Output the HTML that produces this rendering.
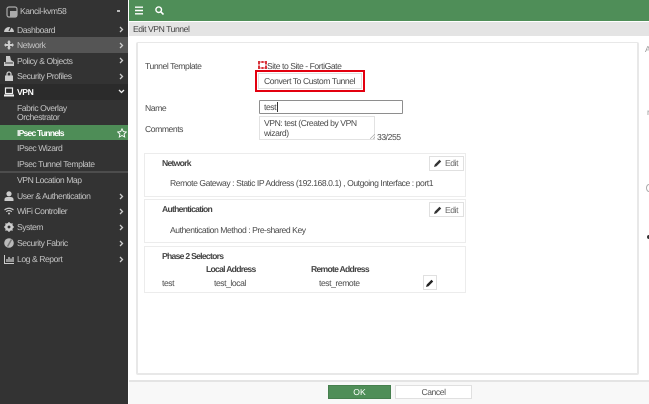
<!DOCTYPE html>
<html><head><meta charset="utf-8"><title>Edit VPN Tunnel</title>
<style>
html,body{margin:0;padding:0;background:#fff}
body{width:649px;height:404px;position:relative;overflow:hidden}
#w{position:absolute;left:0;top:0;width:649px;height:404px;overflow:hidden;background:#fff;filter:blur(.35px);font-family:"Liberation Sans",sans-serif;font-size:8.6px;color:#4a4a4a;letter-spacing:-.44px;text-rendering:geometricPrecision}
.a{position:absolute;white-space:nowrap;line-height:12px}
.box{position:absolute;box-sizing:border-box}
#side{position:absolute;left:0;top:0;width:128px;height:404px;background:#333}
.row{position:absolute;left:0;width:128px;height:16px}
.m{position:absolute;left:17px;white-space:nowrap;line-height:12px;color:#c4c4c4}
.chev{position:absolute;left:119px;width:5px;height:7px}
.ic{position:absolute;left:4px;width:10px;height:10px}
.sec{position:absolute;left:144px;width:322px;background:#fff;border:1px solid #ececec;box-sizing:border-box}
.btn{position:absolute;box-sizing:border-box;background:#fff;border:1px solid #e0e0e0}
b{font-weight:bold;color:#444;letter-spacing:-.72px}
</style></head><body><div id="w">
<div id="side">
 <div class="row" style="top:37px;background:#555"></div>
 <div class="row" style="top:84px;background:#2b2b2b"></div>
 <div class="row" style="top:125px;height:15px;background:#4e8d57"></div>
 <div class="row" style="top:171px;height:2px;background:#4d4d4d"></div>

 <svg class="ic" style="left:6px;top:6px;width:12px;height:12px" viewBox="0 0 12 12"><rect x="1" y="1" width="10" height="10" rx="2" fill="none" stroke="#aaa" stroke-width="1.2"/><rect x="4" y="5" width="7" height="6" fill="#aaa"/></svg>
 <div class="m" style="left:20px;top:5px">Kancil-kvm58</div>
 <div class="box" style="left:117px;top:10px;width:3px;height:2px;background:#bbb"></div>

 <svg class="ic" style="top:24px" viewBox="0 0 10 10"><path d="M0 8a5 5 0 1 1 10 0z" fill="#c8c8c8"/><path d="M5 7L7 3" stroke="#333" stroke-width="1.2"/></svg>
 <div class="m" style="top:24px">Dashboard</div>
 <svg class="ic" style="top:40px" viewBox="0 0 10 10"><path d="M5 0L7 2.500H6V4H8V3L10 5 8 7V6H6V7.500H7L5 10 3 7.500H4V6H2V7L0 5 2 3V4H4V2.500H3z" fill="#ccc"/></svg>
 <div class="m" style="top:39px">Network</div>
 <svg class="ic" style="top:56px" viewBox="0 0 10 10"><path d="M2 0H6L7 4 10 6V10H0V6H2z" fill="#c8c8c8"/><path d="M1 7H9" stroke="#333"/></svg>
 <div class="m" style="top:55px">Policy &amp; Objects</div>
 <svg class="ic" style="top:71px" viewBox="0 0 10 10"><rect x="1" y="4.500" width="8" height="5.500" fill="#ccc"/><path d="M3 5V3a2 2 0 0 1 4 0V5" fill="none" stroke="#ccc" stroke-width="1.300"/></svg>
 <div class="m" style="top:70px">Security Profiles</div>
 <svg class="ic" style="top:87px" viewBox="0 0 10 10"><rect x="1.500" y="1" width="7" height="5.500" fill="none" stroke="#eee" stroke-width="1.200"/><rect x="0" y="7.500" width="10" height="2" fill="#eee"/></svg>
 <div class="m" style="top:86px;color:#fff;font-weight:bold">VPN</div>

 <div class="m" style="top:102px">Fabric Overlay</div>
 <div class="m" style="top:111px">Orchestrator</div>
 <div class="m" style="top:127px;color:#fff;font-weight:bold;letter-spacing:-.8px">IPsec Tunnels</div>
 <svg class="ic" style="left:117px;top:128px" viewBox="0 0 10 10"><path d="M5 .8L6.300 3.600 9.300 4 7.100 6 7.700 9 5 7.500 2.300 9 2.900 6 .7 4 3.700 3.600z" fill="none" stroke="#fff" stroke-width=".9"/></svg>
 <div class="m" style="top:142px">IPsec Wizard</div>
 <div class="m" style="top:158px">IPsec Tunnel Template</div>
 <div class="m" style="top:174px">VPN Location Map</div>

 <svg class="ic" style="top:191px" viewBox="0 0 10 10"><circle cx="5" cy="2.800" r="2.600" fill="#ccc"/><path d="M.5 10V8Q1 6 3.500 6H6.500Q9 6 9.500 8V10z" fill="#ccc"/></svg>
 <div class="m" style="top:190px">User &amp; Authentication</div>
 <svg class="ic" style="top:206px" viewBox="0 0 10 10"><path d="M.5 4Q5 .5 9.500 4M2.200 5.700Q5 3.500 7.800 5.700" fill="none" stroke="#ccc" stroke-width="1.100"/><circle cx="5" cy="7.500" r="1" fill="#ccc"/></svg>
 <div class="m" style="top:205px">WiFi Controller</div>
 <svg class="ic" style="top:222px" viewBox="0 0 10 10"><circle cx="5" cy="5" r="3" fill="none" stroke="#ccc" stroke-width="2.200"/><path d="M5 0V10M0 5H10M1.500 1.500L8.500 8.500M8.500 1.500L1.500 8.500" stroke="#ccc" stroke-width="1.300"/><circle cx="5" cy="5" r="1.400" fill="#333"/></svg>
 <div class="m" style="top:221px">System</div>
 <svg class="ic" style="top:238px" viewBox="0 0 10 10"><circle cx="5" cy="5" r="4.800" fill="#bbb"/><path d="M7.500 1.500L3.500 8.500" stroke="#777" stroke-width="1.500"/></svg>
 <div class="m" style="top:237px">Security Fabric</div>
 <svg class="ic" style="top:254px" viewBox="0 0 10 10"><path d="M.5 1V9.500H10" fill="none" stroke="#ccc"/><path d="M3 8V5M5 8V3M7 8V4.500M9 8V3" stroke="#ccc" stroke-width="1.300"/></svg>
 <div class="m" style="top:253px">Log &amp; Report</div>

 <svg class="chev" style="top:26px" viewBox="0 0 5 7"><path d="M1 1L3.500 3.500 1 6" fill="none" stroke="#ccc" stroke-width="1.300"/></svg>
 <svg class="chev" style="top:42px" viewBox="0 0 5 7"><path d="M1 1L3.500 3.500 1 6" fill="none" stroke="#ccc" stroke-width="1.300"/></svg>
 <svg class="chev" style="top:57px" viewBox="0 0 5 7"><path d="M1 1L3.500 3.500 1 6" fill="none" stroke="#ccc" stroke-width="1.300"/></svg>
 <svg class="chev" style="top:73px" viewBox="0 0 5 7"><path d="M1 1L3.500 3.500 1 6" fill="none" stroke="#ccc" stroke-width="1.300"/></svg>
 <svg class="chev" style="left:118px;top:89px;width:7px;height:5px" viewBox="0 0 7 5"><path d="M1 1L3.500 3.500 6 1" fill="none" stroke="#eee" stroke-width="1.300"/></svg>
 <svg class="chev" style="top:193px" viewBox="0 0 5 7"><path d="M1 1L3.500 3.500 1 6" fill="none" stroke="#ccc" stroke-width="1.300"/></svg>
 <svg class="chev" style="top:208px" viewBox="0 0 5 7"><path d="M1 1L3.500 3.500 1 6" fill="none" stroke="#ccc" stroke-width="1.300"/></svg>
 <svg class="chev" style="top:224px" viewBox="0 0 5 7"><path d="M1 1L3.500 3.500 1 6" fill="none" stroke="#ccc" stroke-width="1.300"/></svg>
 <svg class="chev" style="top:240px" viewBox="0 0 5 7"><path d="M1 1L3.500 3.500 1 6" fill="none" stroke="#ccc" stroke-width="1.300"/></svg>
 <svg class="chev" style="top:256px" viewBox="0 0 5 7"><path d="M1 1L3.500 3.500 1 6" fill="none" stroke="#ccc" stroke-width="1.300"/></svg>
</div>

<div class="box" style="left:129px;top:0;width:520px;height:21px;background:#4f8e58"></div>
<svg class="a" style="left:135px;top:6px" width="9" height="9" viewBox="0 0 9 9"><path d="M0 1.200H8M0 4.500H8M0 7.800H8" stroke="#fff" stroke-width="1.400"/></svg>
<svg class="a" style="left:155px;top:6px" width="9" height="9" viewBox="0 0 9 9"><circle cx="3.700" cy="3.700" r="2.800" fill="none" stroke="#fff" stroke-width="1.400"/><path d="M5.800 5.800L8.500 8.500" stroke="#fff" stroke-width="1.600"/></svg>

<div class="box" style="left:129px;top:22px;width:520px;height:14px;background:#e4e4e4"></div>
<div class="a" style="left:133px;top:23px;color:#444">Edit VPN Tunnel</div>

<div class="box" style="left:136px;top:42px;width:503px;height:333px;background:#fff;border:1px solid #e8e8e8;border-width:1px 2px 2px 2px;border-radius:2px"></div>
<div class="a" style="left:645px;top:43px;color:#999">A</div>
<div class="a" style="left:647px;top:106px;color:#999">r</div>
<div class="box" style="left:646px;top:184px;width:6px;height:8px;border:1px solid #aaa;border-radius:50%"></div>
<div class="box" style="left:647px;top:235px;width:4px;height:4px;background:#333;border-radius:50%"></div>

<div class="a" style="left:145px;top:60px">Tunnel Template</div>
<svg class="a" style="left:258px;top:61px" width="9" height="8" viewBox="0 0 9 8"><path d="M0 1H9M0 7H9" stroke="#d8333a" stroke-width="2" stroke-dasharray="2.400 .9"/><path d="M1 2V6M8 2V6" stroke="#d8333a" stroke-width="2" stroke-dasharray="1.500 1"/></svg>
<div class="a" style="left:267px;top:60px">Site to Site - FortiGate</div>
<div class="box" style="left:255px;top:70px;width:110px;height:22px;border:2px solid #e3000f"></div>
<div class="btn" style="left:258px;top:73px;width:104px;height:16px"></div>
<div class="a" style="left:264px;top:75px">Convert To Custom Tunnel</div>

<div class="a" style="left:145px;top:102px">Name</div>
<div class="box" style="left:259px;top:100px;width:144px;height:14px;background:#fff;border:1px solid #8e8e8e;border-radius:1px"></div>
<div class="a" style="left:264px;top:101px">test</div>
<div class="box" style="left:277px;top:102px;width:1px;height:10px;background:#333"></div>

<div class="a" style="left:145px;top:123px">Comments</div>
<div class="box" style="left:259px;top:116px;width:116px;height:24px;background:#fff;border:1px solid #e2e2e2"></div>
<div class="a" style="left:264px;top:118px;line-height:10px">VPN: test (Created by VPN<br>wizard)</div>
<svg class="a" style="left:370px;top:134px" width="5" height="5" viewBox="0 0 5 5"><path d="M0 5L5 0M3 5L5 3" stroke="#aaa" stroke-width=".7"/></svg>
<div class="a" style="left:377px;top:131px">33/255</div>

<div class="sec" style="top:153px;height:44px"></div>
<div class="a" style="left:162px;top:157px"><b>Network</b></div>
<div class="btn" style="left:429px;top:156px;width:35px;height:15px"></div>
<svg class="a" style="left:434px;top:159px" width="8" height="8" viewBox="0 0 8 8"><path d="M0 8L.8 5.500 5.500 .8 7.200 2.500 2.500 7.200z" fill="#333"/></svg>
<div class="a" style="left:445px;top:157px;color:#666">Edit</div>
<div class="a" style="left:170px;top:177px">Remote Gateway : Static IP Address (192.168.0.1) , Outgoing Interface : port1</div>

<div class="sec" style="top:199px;height:44px"></div>
<div class="a" style="left:162px;top:203px"><b>Authentication</b></div>
<div class="btn" style="left:429px;top:202px;width:35px;height:15px"></div>
<svg class="a" style="left:434px;top:206px" width="8" height="8" viewBox="0 0 8 8"><path d="M0 8L.8 5.500 5.500 .8 7.200 2.500 2.500 7.200z" fill="#333"/></svg>
<div class="a" style="left:445px;top:204px;color:#666">Edit</div>
<div class="a" style="left:170px;top:224px">Authentication Method : Pre-shared Key</div>

<div class="sec" style="top:246px;height:47px"></div>
<div class="a" style="left:162px;top:250px"><b>Phase 2 Selectors</b></div>
<div class="a" style="left:206px;top:263px"><b>Local Address</b></div>
<div class="a" style="left:311px;top:263px"><b>Remote Address</b></div>
<div class="a" style="left:162px;top:277px">test</div>
<div class="a" style="left:214px;top:277px">test_local</div>
<div class="a" style="left:319px;top:277px">test_remote</div>
<div class="btn" style="left:423px;top:275px;width:14px;height:15px"></div>
<svg class="a" style="left:426px;top:279px" width="8" height="8" viewBox="0 0 8 8"><path d="M0 8L.8 5.500 5.500 .8 7.200 2.500 2.500 7.200z" fill="#222"/></svg>

<div class="box" style="left:129px;top:380px;width:520px;height:24px;background:#f8f8f8;border-top:2px solid #e4e4e4"></div>
<div class="box" style="left:328px;top:385px;width:63px;height:14px;background:#4f8e58;border:1px solid #467f4e"></div>
<div class="a" style="left:328px;top:386px;width:63px;text-align:center;color:#fff;letter-spacing:0">OK</div>
<div class="btn" style="left:395px;top:385px;width:77px;height:14px"></div>
<div class="a" style="left:395px;top:386px;width:77px;text-align:center;color:#555">Cancel</div>
</div></body></html>
